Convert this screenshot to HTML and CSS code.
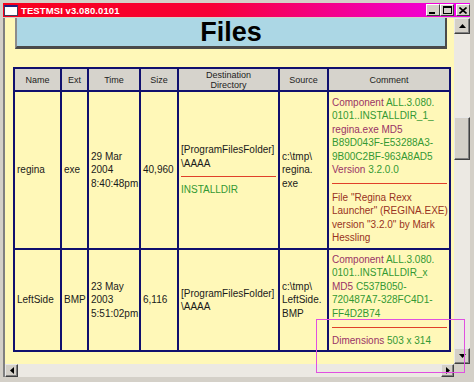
FILE: index.html
```html
<!DOCTYPE html>
<html>
<head>
<meta charset="utf-8">
<title>TESTMSI v3.080.0101</title>
<link rel="stylesheet" href="styles.css">
</head>
<body>
<div class="window">
  <div class="titlebar">
    <span class="app-icon"></span>
    <span class="title">TESTMSI v3.080.0101</span>
    <div class="controls">
      <span class="cbtn"><svg width="8" height="7" viewBox="0 0 8 7"><rect x="0" y="5" width="6" height="2" fill="#000"/></svg></span>
      <span class="cbtn"><svg width="9" height="8" viewBox="0 0 9 8"><rect x="0.5" y="0.5" width="8" height="7" fill="none" stroke="#000"/><rect x="0" y="0" width="9" height="2" fill="#000"/></svg></span>
      <span class="cbtn close"><svg width="8" height="7" viewBox="0 0 8 7"><path d="M0.5 0.5 L7.5 6.5 M7.5 0.5 L0.5 6.5" stroke="#000" stroke-width="1.6"/></svg></span>
    </div>
  </div>
  <div class="client">
    <div class="main">
      <div class="content">
        <h1 class="heading">Files</h1>
        <div class="grid">
          <div class="hcell">Name</div>
          <div class="hcell">Ext</div>
          <div class="hcell">Time</div>
          <div class="hcell">Size</div>
          <div class="hcell">Destination<br>Directory</div>
          <div class="hcell">Source</div>
          <div class="hcell">Comment</div>

          <div class="cell">regina</div>
          <div class="cell">exe</div>
          <div class="cell">29 Mar<br>2004<br>8:40:48pm</div>
          <div class="cell">40,960</div>
          <div class="cell"><div>[ProgramFilesFolder]<br>\AAAA</div><div class="sep"></div><div class="val">INSTALLDIR</div></div>
          <div class="cell">c:\tmp\<br>regina.<br>exe</div>
          <div class="cell comment"><div><span class="lbl">Component</span> <span class="val">ALL.3.080.<br>0101..INSTALLDIR_1_</span><br><span class="lbl">regina.exe MD5</span><br><span class="val">B89D043F-E53288A3-<br>9B00C2BF-963A8AD5</span><br><span class="lbl">Version</span> <span class="val">3.2.0.0</span></div><div class="sep wide"></div><div class="file">File "Regina Rexx<br>Launcher" (REGINA.EXE)<br>version "3.2.0" by Mark<br>Hessling</div></div>

          <div class="cell">LeftSide</div>
          <div class="cell">BMP</div>
          <div class="cell">23 May<br>2003<br>5:51:02pm</div>
          <div class="cell">6,116</div>
          <div class="cell">[ProgramFilesFolder]<br>\AAAA</div>
          <div class="cell">c:\tmp\<br>LeftSide.<br>BMP</div>
          <div class="cell comment"><div><span class="lbl">Component</span> <span class="val">ALL.3.080.<br>0101..INSTALLDIR_x</span><br><span class="lbl">MD5</span> <span class="val">C537B050-<br>720487A7-328FC4D1-<br>FF4D2B74</span></div><div class="sep wide"></div><div><span class="lbl">Dimensions</span> <span class="val">503 x 314</span></div></div>
        </div>
      </div>
      <div class="vscroll">
        <div class="sbtn"><svg width="7" height="4" viewBox="0 0 7 4"><path d="M3.5 0 L7 4 L0 4 Z" fill="#000"/></svg></div>
        <div class="vtrack"><div class="thumb"></div></div>
        <div class="sbtn"><svg width="7" height="4" viewBox="0 0 7 4"><path d="M0 0 L7 0 L3.5 4 Z" fill="#000"/></svg></div>
      </div>
    </div>
    <div class="hscroll">
      <div class="sbtn hbtn"><svg width="4" height="7" viewBox="0 0 4 7"><path d="M0 3.5 L4 0 L4 7 Z" fill="#000"/></svg></div>
      <div class="htrack"></div>
      <div class="sbtn hbtn"><svg width="4" height="7" viewBox="0 0 4 7"><path d="M4 3.5 L0 0 L0 7 Z" fill="#000"/></svg></div>
      <div class="corner"></div>
    </div>
  </div>
  <div class="selection"></div>
</div>
</body>
</html>
```
FILE: styles.css
```css
html, body {
  margin: 0;
  padding: 0;
  background: #d4d0c8;
}
.window {
  position: relative;
  width: 474px;
  height: 382px;
  box-sizing: border-box;
  padding: 3px 4px 5px 3px;
  background: #d4d0c8;
  display: flex;
  flex-direction: column;
  overflow: hidden;
}
.titlebar {
  height: 14px;
  margin-bottom: 1px;
  flex: none;
  display: flex;
  align-items: center;
  background: linear-gradient(90deg, #f8001c 0%, #f80036 45%, #f000f0 100%);
  padding-left: 1px;
}
.app-icon {
  width: 12px;
  height: 8px;
  background: #fff;
  border: 1px solid #404060;
  border-top: 2px solid #202080;
  margin-right: 3px;
}
.title {
  font-family: "Liberation Sans", Arial, sans-serif;
  font-weight: bold;
  font-size: 9.5px;
  color: #fff;
  letter-spacing: 0.1px;
}
.controls {
  margin-left: auto;
  display: flex;
  align-items: center;
  margin-right: 0;
}
.cbtn {
  width: 14px;
  height: 12px;
  box-sizing: border-box;
  background: #d4d0c8;
  border: 1px solid;
  border-color: #fff #404040 #404040 #fff;
  display: flex;
  align-items: center;
  justify-content: center;
}
.cbtn.close {
  margin-left: 2px;
}
.client {
  flex: 1;
  display: flex;
  flex-direction: column;
  border-left: 2px solid #808080;
  min-height: 0;
}
.main {
  flex: 1;
  display: flex;
  min-height: 0;
}
.content {
  flex: 1;
  background: #fff8b8;
  overflow: hidden;
  padding-left: 8px;
}
.heading {
  margin: 0 0 0 2px;
  width: 432px;
  height: 31px;
  box-sizing: border-box;
  background: #acd7e5;
  border-left: 2px solid #8c8c8c;
  border-right: 2px solid #4a4a4a;
  border-bottom: 3px solid #4a4a4a;
  font-family: "Liberation Sans", Arial, sans-serif;
  font-weight: bold;
  font-size: 27px;
  line-height: 28px;
  text-align: center;
  color: #000;
}
.grid {
  margin-top: 18px;
  width: 438px;
  box-sizing: border-box;
  display: grid;
  grid-template-columns: 45px 25px 50px 36px 99px 47px 120px;
  grid-template-rows: 21px 156px 100px;
  gap: 2px;
  padding: 2px;
  background: #10106e;
}
.hcell {
  background: #d6d3cc;
  font-family: "Liberation Sans", Arial, sans-serif;
  font-size: 9px;
  line-height: 10px;
  color: #222;
  display: flex;
  align-items: center;
  justify-content: center;
  text-align: center;
}
.cell {
  background: #fff8b8;
  font-family: "Liberation Sans", Arial, sans-serif;
  font-size: 10px;
  line-height: 13.5px;
  color: #1a1a1a;
  white-space: nowrap;
  display: flex;
  flex-direction: column;
  justify-content: center;
  padding: 0 2px;
  overflow: hidden;
}
.comment {
  padding-left: 3px;
}
.sep {
  height: 1px;
  background: #e0402a;
  margin: 6px 0 6px 0;
}
.sep.wide {
  margin: 6.5px 0 6.5px 0;
}
.lbl {
  color: #993366;
}
.val {
  color: #339933;
}
.file {
  color: #993322;
}
.vscroll {
  width: 16px;
  flex: none;
  display: flex;
  flex-direction: column;
  background: #ece9e3;
}
.sbtn {
  width: 16px;
  height: 16px;
  flex: none;
  box-sizing: border-box;
  background: #d4d0c8;
  border: 1px solid;
  border-color: #e8e8e8 #404040 #404040 #e8e8e8;
  box-shadow: inset -1px -1px #808080;
  display: flex;
  align-items: center;
  justify-content: center;
}
.vtrack {
  flex: 1;
}
.thumb {
  margin-top: 83px;
  height: 43px;
  box-sizing: border-box;
  background: #d4d0c8;
  border: 1px solid;
  border-color: #e8e8e8 #404040 #404040 #e8e8e8;
  box-shadow: inset -1px -1px #808080;
}
.hscroll {
  height: 13px;
  flex: none;
  display: flex;
  background: #ece9e3;
}
.hbtn {
  width: 13px;
  height: 13px;
}
.htrack {
  flex: 1;
}
.corner {
  width: 16px;
  background: #d4d0c8;
}
.selection {
  position: absolute;
  left: 316px;
  top: 319px;
  width: 147px;
  height: 52px;
  border: 1px solid #e050e0;
}
```
